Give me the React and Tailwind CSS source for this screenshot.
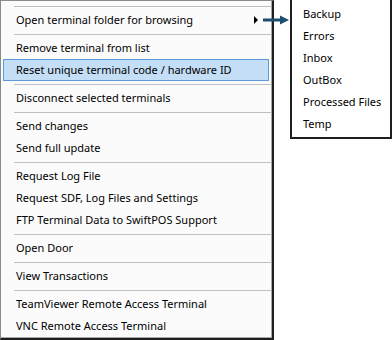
import React from "react";

const Item = ({ children, active, arrow }) => (
  <div
    className={
      "h-[22px] flex items-center pl-[12px] mx-[2px] relative border " +
      (active ? "bg-[#c4def6] border-[#5a9bd8]" : "border-transparent")
    }
  >
    <span className="whitespace-nowrap">{children}</span>
    {arrow && (
      <svg className="absolute left-[250px] top-[6px]" width="5" height="8" viewBox="0 0 5 8">
        <path d="M0 0 L4 4 L0 8 Z" fill="#000" />
      </svg>
    )}
  </div>
);

const Sep = () => (
  <div className="h-[6px] flex items-center pl-[13px]">
    <div className="h-px w-full bg-[#bfbfbf]" />
  </div>
);

const SubItem = ({ children }) => (
  <div className="h-[22px] flex items-center pl-[11px] whitespace-nowrap">{children}</div>
);

export default function App() {
  return (
    <div
      className="relative w-[392px] h-[340px] bg-white text-black text-[11px] overflow-hidden"
      style={{ fontFamily: '"Noto Sans", "Open Sans", sans-serif' }}
    >
      <div className="flex items-start">
        <div className="w-[274px] h-[340px] border-l border-t border-[#8a8a8a] border-r-2 border-b-2 border-r-[#1e1e1e] border-b-[#1e1e1e] bg-[#fbfbfb]">
          <div className="h-full border-r border-b border-[#a8a8a8] pt-[2px] flex flex-col">
            <Sep />
            <Item arrow>Open terminal folder for browsing</Item>
            <Sep />
            <Item>Remove terminal from list</Item>
            <Item active>Reset unique terminal code / hardware ID</Item>
            <Sep />
            <Item>Disconnect selected terminals</Item>
            <Sep />
            <Item>Send changes</Item>
            <Item>Send full update</Item>
            <Sep />
            <Item>Request Log File</Item>
            <Item>Request SDF, Log Files and Settings</Item>
            <Item>FTP Terminal Data to SwiftPOS Support</Item>
            <Sep />
            <Item>Open Door</Item>
            <Sep />
            <Item>View Transactions</Item>
            <Sep />
            <Item>TeamViewer Remote Access Terminal</Item>
            <Item>VNC Remote Access Terminal</Item>
          </div>
        </div>
        <div className="w-[16px] h-[40px] relative">
          <svg className="absolute left-[-11px] top-[14px]" width="27" height="12" viewBox="0 0 27 12">
            <rect x="0" y="4.5" width="20" height="3" fill="#1c4f6e" />
            <path d="M17 1.5 L26 6 L17 10.5 Z" fill="#1c4f6e" />
          </svg>
        </div>
        <div className="w-[102px] h-[139px] border-2 border-t-0 border-[#1e1e1e] bg-white pt-[3px]">
          <SubItem>Backup</SubItem>
          <SubItem>Errors</SubItem>
          <SubItem>Inbox</SubItem>
          <SubItem>OutBox</SubItem>
          <SubItem>Processed Files</SubItem>
          <SubItem>Temp</SubItem>
        </div>
      </div>
    </div>
  );
}
